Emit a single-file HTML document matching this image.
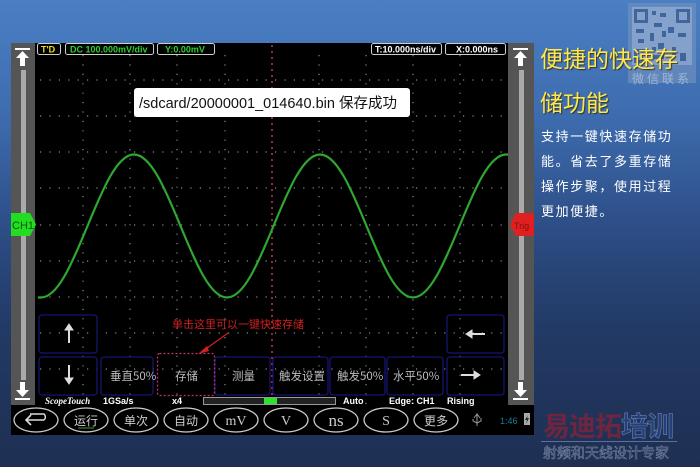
<!DOCTYPE html>
<html><head><meta charset="utf-8"><style>
*{margin:0;padding:0;box-sizing:border-box}
body{width:700px;height:467px;overflow:hidden;position:relative;font-family:"Liberation Sans","Noto Sans CJK SC",sans-serif;
background:linear-gradient(180deg,#4a7fc4 0%,#3d6cae 25%,#2c4c84 50%,#223a66 70%,#1e2f52 100%)}
.a{position:absolute}
.title{color:#ffe84a;font-size:23px;left:540px;line-height:44px;top:35px;font-family:"Noto Sans CJK SC",sans-serif;text-shadow:1px 1px 1px #333;white-space:nowrap}
.body{color:#fff;font-size:13px;left:541px;top:123px;line-height:25px;letter-spacing:1.6px;font-family:"Noto Sans CJK SC",sans-serif;white-space:nowrap}
</style></head><body>
<div class="a" style="left:628px;top:3px;width:68px;height:80px;background:#6f8fbd;opacity:.7">
<svg width="68" height="64"><rect x="4" y="4" width="60" height="58" fill="#9fb3d2"/>
<g fill="#3d5e8e"><rect x="6" y="6" width="14" height="14"/><rect x="48" y="6" width="14" height="14"/><rect x="6" y="46" width="14" height="14"/>
<rect x="24" y="8" width="4" height="4"/><rect x="32" y="10" width="6" height="4"/><rect x="26" y="20" width="8" height="4"/><rect x="40" y="24" width="6" height="6"/><rect x="22" y="30" width="4" height="8"/><rect x="50" y="30" width="8" height="4"/><rect x="30" y="40" width="6" height="6"/><rect x="44" y="44" width="4" height="8"/><rect x="26" y="52" width="10" height="4"/><rect x="52" y="50" width="6" height="8"/><rect x="8" y="26" width="8" height="4"/><rect x="10" y="36" width="6" height="4"/><rect x="34" y="28" width="4" height="6"/><rect x="24" y="44" width="4" height="4"/></g>
<g fill="#9fb3d2"><rect x="9" y="9" width="8" height="8"/><rect x="51" y="9" width="8" height="8"/><rect x="9" y="49" width="8" height="8"/></g></svg>
<div style="color:#c8d4e6;font-size:12px;text-align:center;letter-spacing:3px;margin-top:-2px;font-family:'Noto Sans CJK SC',sans-serif">微信联系</div></div>

<div class="a title">便捷的快速存<br>储功能</div>
<div class="a body">支持一键快速存储功<br>能。省去了多重存储<br>操作步聚，使用过程<br>更加便捷。</div>

<div class="a" style="left:543px;top:410px;font-size:27px;font-weight:bold;color:#6e2640;letter-spacing:-1px;font-family:'Noto Sans CJK SC',sans-serif;line-height:30px">易迪拓<span style="color:#24407a;-webkit-text-stroke:0.6px #6e82b0">培训</span></div>
<div class="a" style="left:541px;top:441px;width:136px;height:1px;background:#5e7096"></div>
<div class="a" style="left:543px;top:444px;font-size:14px;color:#1c2c4c;-webkit-text-stroke:0.5px #8592b0;font-family:'Noto Sans CJK SC',sans-serif;line-height:18px">射频和天线设计专家</div>

<svg class="a" style="left:0;top:0" width="700" height="467" font-family="Liberation Sans, Noto Sans CJK SC, sans-serif">
<rect x="11" y="43" width="523" height="392" fill="#000"/>
<rect x="11" y="43" width="24" height="362" fill="#555"/>
<rect x="508" y="43" width="26" height="362" fill="#555"/>
<rect x="21" y="70" width="5" height="310" fill="#aaa"/>
<rect x="519" y="70" width="5" height="310" fill="#aaa"/>
<g fill="#fff">
<rect x="15" y="48" width="15" height="2"/><path d="M22.5 51 L16 58 H20 V66 H25 V58 H29Z"/>
<rect x="513" y="48" width="15" height="2"/><path d="M520.5 51 L514 58 H518 V66 H523 V58 H527Z"/>
<path d="M22.5 397 L16 390 H20 V382 H25 V390 H29Z"/><rect x="15" y="398" width="15" height="2"/>
<path d="M520.5 397 L514 390 H518 V382 H523 V390 H527Z"/><rect x="513" y="398" width="15" height="2"/>
</g>
<g stroke="#8a8a8a" stroke-width="1.2" stroke-dasharray="1.2 8.2">
<path d="M83 55V405M130 55V405M177 55V405M225 55V405M319 55V405M366 55V405M413 55V405M460 55V405"/>
<path d="M40 80H506M40 116H506M40 152H506M40 188H506M40 225H506M40 261H506M40 297H506M40 333H506M40 369H506"/>
</g>
<path d="M272 45V405" stroke="#c04040" stroke-width="1.5" stroke-dasharray="2 4"/>
<path d="M38,297.5 H41 c16.83,0 31.34,-34.87 46.5,-71.5 c15.16,-36.63 29.67,-71.5 46.5,-71.5 c16.83,0 31.34,34.87 46.5,71.5 c15.16,36.63 29.67,71.5 46.5,71.5 c16.83,0 31.34,-34.87 46.5,-71.5 c15.16,-36.63 29.67,-71.5 46.5,-71.5 c16.83,0 31.34,34.87 46.5,71.5 c15.16,36.63 29.67,71.5 46.5,71.5 c16.83,0 31.34,-34.87 46.5,-71.5 c15.16,-36.63 29.67,-71.5 46.5,-71.5 H508" fill="none" stroke="#2fa82f" stroke-width="2.2"/>
<path d="M11 213H30L36 224.5L30 236H11Z" fill="#22dd22"/>
<text x="12" y="229" font-size="11" fill="#0a5a0a">CH1</text>
<path d="M534 213H516L510 224.5L516 236H534Z" fill="#e02020"/>
<text x="514" y="229" font-size="9" fill="#801010">Trig</text>
<g fill="none" stroke="#ccc" stroke-width="1"><rect x="37.5" y="43.5" width="23" height="11" rx="2"/><rect x="65.5" y="43.5" width="88" height="11" rx="2"/><rect x="157.5" y="43.5" width="57" height="11" rx="2"/><rect x="371.5" y="43.5" width="70" height="11" rx="2"/><rect x="445.5" y="43.5" width="60" height="11" rx="2"/></g>
<g font-size="9" font-weight="bold"><text x="41" y="52.5" fill="#e8e020">T'D</text><text x="70" y="52.5" fill="#30d030">DC 100.000mV/div</text><text x="165" y="52.5" fill="#30d030">Y:0.00mV</text>
<text x="375" y="52.5" fill="#fff">T:10.000ns/div</text><text x="456" y="52.5" fill="#fff">X:0.000ns</text></g>
<rect x="134" y="88" width="276" height="29" rx="3" fill="#fff"/>
<text x="139" y="108" font-size="14.5" fill="#111">/sdcard/20000001_014640.bin  保存成功</text>
<g fill="none" stroke="#141470" stroke-width="1.3">
<rect x="39" y="315" width="58" height="38" rx="3"/><rect x="39" y="357" width="58" height="38" rx="3"/>
<rect x="101" y="357" width="52" height="38" rx="3"/><rect x="215" y="357" width="55" height="38" rx="3"/>
<rect x="273" y="357" width="55" height="38" rx="3"/><rect x="330" y="357" width="55" height="38" rx="3"/><rect x="387" y="357" width="56" height="38" rx="3"/>
<rect x="447" y="315" width="57" height="38" rx="3"/><rect x="447" y="357" width="57" height="38" rx="3"/></g>
<rect x="157.5" y="353.5" width="57" height="42" rx="2" fill="none" stroke="#c0306a" stroke-width="1.3" stroke-dasharray="2 2"/>
<g fill="#ddd" stroke="#ddd"><path d="M69 343V327" stroke-width="2"/><path d="M65 330L69 324L73 330Z"/>
<path d="M69 365V381" stroke-width="2"/><path d="M65 378L69 384L73 378Z"/>
<path d="M485 334H470" stroke-width="2"/><path d="M472 330L466 334L472 338Z"/>
<path d="M461 375H476" stroke-width="2"/><path d="M474 371L480 375L474 379Z"/></g>
<g font-size="11.5" fill="#bbb" font-family="Noto Sans CJK SC, sans-serif"><text x="110" y="380">垂直50%</text><text x="175" y="380">存储</text><text x="232" y="380">测量</text><text x="279" y="380">触发设置</text><text x="337" y="380">触发50%</text><text x="393" y="380">水平50%</text></g>
<text x="172" y="328" font-size="11" fill="#d02020" font-family="Noto Sans CJK SC, sans-serif">单击这里可以一键快速存储</text>
<path d="M228 333L203 351" stroke="#d02020" stroke-width="1.2"/><path d="M198 354L207 346L209 351Z" fill="#d02020"/>
<g font-size="9" fill="#fff" font-weight="bold"><text x="45" y="404" font-family="Liberation Serif,serif" font-style="italic">ScopeTouch</text><text x="103" y="404">1GSa/s</text><text x="172" y="404">x4</text><text x="343" y="404">Auto</text><text x="389" y="404">Edge:   CH1</text><text x="447" y="404">Rising</text></g>
<rect x="203.5" y="397.5" width="132" height="7" fill="#222" stroke="#999"/>
<rect x="264" y="398" width="13" height="6" fill="#30e030"/>
<g fill="none" stroke="#ccc" stroke-width="1.3"><ellipse cx="36" cy="420" rx="22" ry="12"/><ellipse cx="86" cy="420" rx="22" ry="12"/><ellipse cx="136" cy="420" rx="22" ry="12"/><ellipse cx="186" cy="420" rx="22" ry="12"/><ellipse cx="236" cy="420" rx="22" ry="12"/><ellipse cx="286" cy="420" rx="22" ry="12"/><ellipse cx="336" cy="420" rx="22" ry="12"/><ellipse cx="386" cy="420" rx="22" ry="12"/><ellipse cx="436" cy="420" rx="22" ry="12"/></g>
<path d="M44 420H27M31 415L26 420L31 425" fill="none" stroke="#ddd" stroke-width="1.6"/>
<path d="M44 420 a4 4 0 0 0 0 -6 H30" fill="none" stroke="#ddd" stroke-width="1.4"/>
<g font-size="12" fill="#ccc" text-anchor="middle" font-family="Noto Sans CJK SC, sans-serif"><text x="86" y="425">运行</text><text x="136" y="425">单次</text><text x="186" y="425">自动</text><text x="436" y="425">更多</text></g>
<path d="M78 428H94" stroke="#2a8a2a" stroke-width="1.2"/>
<g font-size="14" fill="#ccc" text-anchor="middle" font-family="Liberation Serif,serif"><text x="236" y="425">mV</text><text x="286" y="425">V</text><text x="336" y="426" font-size="17">ns</text><text x="386" y="425">S</text></g>
<path d="M477 414V426M474 418L477 414L480 418M473 419V421L477 423M481 418V421L477 423" fill="none" stroke="#999" stroke-width="1"/>
<text x="500" y="424" font-size="9" fill="#1a7a9a">1:46</text>
<rect x="524" y="413" width="6" height="12" fill="#aaa"/><path d="M528 415L525 420H527L526 424L529 418H527Z" fill="#222"/>
</svg>
</body></html>
